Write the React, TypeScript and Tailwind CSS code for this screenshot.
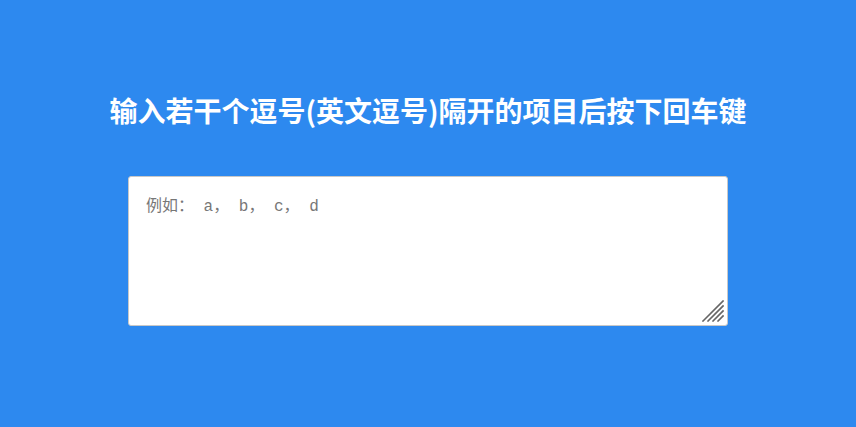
export default function App() {
  return (
    <div className="min-h-[427px] w-full bg-[#2d89ef] flex flex-col items-center pt-[90px] font-['Noto_Sans_CJK_SC','Noto_Sans',sans-serif]">
      <h1 className="text-[28px] leading-[40px] font-bold text-white">
        输入若干个逗号(英文逗号)隔开的项目后按下回车键
      </h1>
      <div className="relative mt-[46px]">
        <textarea
          className="block w-[600px] h-[150px] bg-white border border-[#c8c8c8] rounded-[3px] pl-[17px] pr-[17px] pt-[18px] pb-[16px] text-[16px] leading-[24px] text-[#333] placeholder:text-[#777] outline-none resize-none font-['Liberation_Mono','Courier_New','Noto_Sans_CJK_SC',monospace]"
          placeholder="例如： a， b， c， d"
        />
        <svg
          className="absolute right-[4px] bottom-[4px] pointer-events-none"
          width="22"
          height="22"
          viewBox="0 0 22 22"
        >
          <g stroke="#666" strokeWidth="1.6" strokeLinecap="square">
            <line x1="1" y1="21" x2="21" y2="1" />
            <line x1="6" y1="21" x2="21" y2="6" />
            <line x1="11" y1="21" x2="21" y2="11" />
            <line x1="16" y1="21" x2="21" y2="16" />
          </g>
        </svg>
      </div>
    </div>
  );
}
